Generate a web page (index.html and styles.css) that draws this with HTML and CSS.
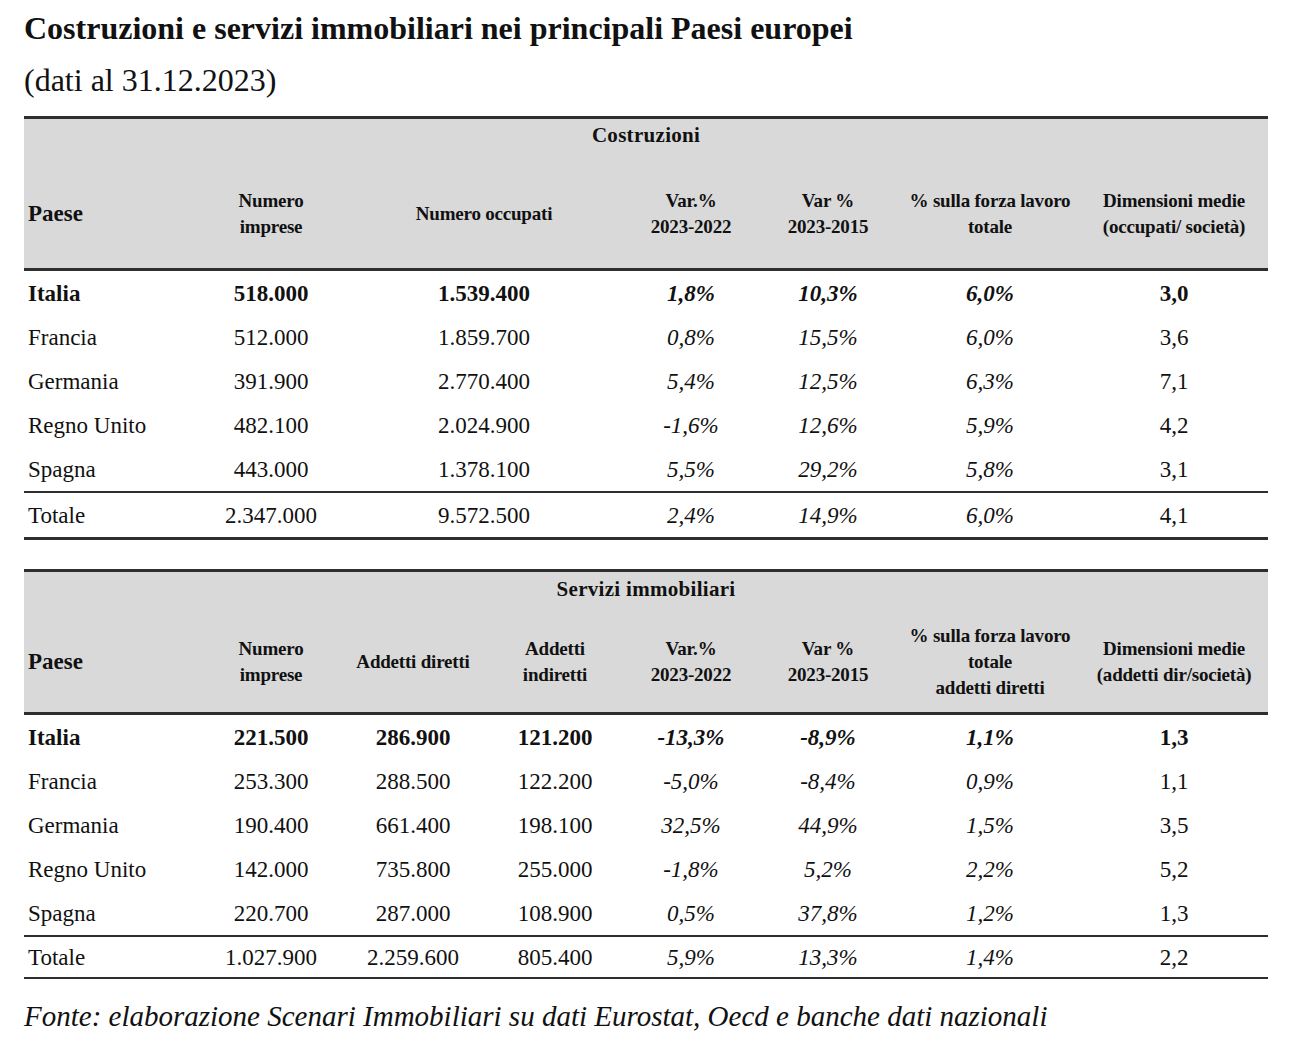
FILE: index.html
```html
<!DOCTYPE html>
<html lang="it">
<head>
<meta charset="utf-8">
<title>Costruzioni e servizi immobiliari</title>
<link rel="stylesheet" href="styles.css">
</head>
<body>
<div class="page">
  <h1 class="title">Costruzioni e servizi immobiliari nei principali Paesi europei</h1>
  <p class="subtitle">(dati al 31.12.2023)</p>

  <table class="data t1">
    <colgroup>
      <col class="c1"><col class="c2"><col class="c3"><col class="c4"><col class="c5"><col class="c6"><col class="c7"><col class="c8">
    </colgroup>
    <thead>
      <tr class="group"><th colspan="8">Costruzioni</th></tr>
      <tr class="heads">
        <th class="paese">Paese</th>
        <th>Numero<br>imprese</th>
        <th colspan="2">Numero occupati</th>
        <th>Var.%<br>2023-2022</th>
        <th>Var %<br>2023-2015</th>
        <th>% sulla forza lavoro<br>totale</th>
        <th>Dimensioni medie<br>(occupati/ società)</th>
      </tr>
    </thead>
    <tbody>
      <tr class="bold"><td class="paese">Italia</td><td>518.000</td><td colspan="2">1.539.400</td><td class="it">1,8%</td><td class="it">10,3%</td><td class="it">6,0%</td><td>3,0</td></tr>
      <tr><td class="paese">Francia</td><td>512.000</td><td colspan="2">1.859.700</td><td class="it">0,8%</td><td class="it">15,5%</td><td class="it">6,0%</td><td>3,6</td></tr>
      <tr><td class="paese">Germania</td><td>391.900</td><td colspan="2">2.770.400</td><td class="it">5,4%</td><td class="it">12,5%</td><td class="it">6,3%</td><td>7,1</td></tr>
      <tr><td class="paese">Regno Unito</td><td>482.100</td><td colspan="2">2.024.900</td><td class="it">-1,6%</td><td class="it">12,6%</td><td class="it">5,9%</td><td>4,2</td></tr>
      <tr><td class="paese">Spagna</td><td>443.000</td><td colspan="2">1.378.100</td><td class="it">5,5%</td><td class="it">29,2%</td><td class="it">5,8%</td><td>3,1</td></tr>
      <tr class="total"><td class="paese">Totale</td><td>2.347.000</td><td colspan="2">9.572.500</td><td class="it">2,4%</td><td class="it">14,9%</td><td class="it">6,0%</td><td>4,1</td></tr>
    </tbody>
  </table>

  <table class="data t2">
    <colgroup>
      <col class="c1"><col class="c2"><col class="c3"><col class="c4"><col class="c5"><col class="c6"><col class="c7"><col class="c8">
    </colgroup>
    <thead>
      <tr class="group"><th colspan="8">Servizi immobiliari</th></tr>
      <tr class="heads">
        <th class="paese">Paese</th>
        <th>Numero<br>imprese</th>
        <th>Addetti diretti</th>
        <th>Addetti<br>indiretti</th>
        <th>Var.%<br>2023-2022</th>
        <th>Var %<br>2023-2015</th>
        <th>% sulla forza lavoro<br>totale<br>addetti diretti</th>
        <th>Dimensioni medie<br>(addetti dir/società)</th>
      </tr>
    </thead>
    <tbody>
      <tr class="bold"><td class="paese">Italia</td><td>221.500</td><td>286.900</td><td>121.200</td><td class="it">-13,3%</td><td class="it">-8,9%</td><td class="it">1,1%</td><td>1,3</td></tr>
      <tr><td class="paese">Francia</td><td>253.300</td><td>288.500</td><td>122.200</td><td class="it">-5,0%</td><td class="it">-8,4%</td><td class="it">0,9%</td><td>1,1</td></tr>
      <tr><td class="paese">Germania</td><td>190.400</td><td>661.400</td><td>198.100</td><td class="it">32,5%</td><td class="it">44,9%</td><td class="it">1,5%</td><td>3,5</td></tr>
      <tr><td class="paese">Regno Unito</td><td>142.000</td><td>735.800</td><td>255.000</td><td class="it">-1,8%</td><td class="it">5,2%</td><td class="it">2,2%</td><td>5,2</td></tr>
      <tr><td class="paese">Spagna</td><td>220.700</td><td>287.000</td><td>108.900</td><td class="it">0,5%</td><td class="it">37,8%</td><td class="it">1,2%</td><td>1,3</td></tr>
      <tr class="total"><td class="paese">Totale</td><td>1.027.900</td><td>2.259.600</td><td>805.400</td><td class="it">5,9%</td><td class="it">13,3%</td><td class="it">1,4%</td><td>2,2</td></tr>
    </tbody>
  </table>

  <p class="source">Fonte: elaborazione Scenari Immobiliari su dati Eurostat, Oecd e banche dati nazionali</p>
</div>
</body>
</html>
```

FILE: styles.css
```css
html, body {
  margin: 0;
  padding: 0;
  background: #ffffff;
}

.page {
  padding: 8px 0 0 24px;
  font-family: "Liberation Serif", "Times New Roman", serif;
  color: #111111;
}

.title {
  margin: 0;
  font-size: 32px;
  font-weight: bold;
  line-height: 40px;
}

.subtitle {
  margin: 12px 0 0 0;
  font-size: 32px;
  line-height: 40px;
}

.data {
  width: 1244px;
  table-layout: fixed;
  border-collapse: collapse;
  font-size: 23px;
}

.t1 { margin-top: 16px; }
.t2 { margin-top: 29px; }

.c1 { width: 176px; }
.c2 { width: 142px; }
.c3 { width: 142px; }
.c4 { width: 142px; }
.c5 { width: 130px; }
.c6 { width: 144px; }
.c7 { width: 180px; }
.c8 { width: 188px; }

.data thead {
  background: #d9d9d9;
}

.data thead tr.group th {
  border-top: 3px solid #2e2e2e;
  font-size: 21px;
  letter-spacing: 0.3px;
  height: 32px;
  padding: 0;
  vertical-align: middle;
}

.t2 thead tr.group th {
  height: 34px;
}

.data thead tr.heads th {
  font-size: 19px;
  line-height: 26px;
  font-weight: bold;
  letter-spacing: -0.2px;
  text-align: center;
  vertical-align: middle;
  padding: 8px 0 0 0;
  height: 109px;
  border-bottom: 3px solid #2e2e2e;
}

.t2 thead tr.heads th {
  padding-top: 6px;
  height: 100px;
}

.data thead tr.heads th.paese {
  font-size: 23px;
  text-align: left;
  padding-left: 4px;
  letter-spacing: 0;
}

.data td {
  height: 44px;
  padding: 0;
  text-align: center;
  vertical-align: middle;
  line-height: 1;
}

.data td.paese {
  text-align: left;
  padding-left: 4px;
}

.data td.it {
  font-style: italic;
}

.data tr.bold td {
  font-weight: bold;
}

.data tr.total td {
  border-top: 2px solid #2e2e2e;
  border-bottom: 3px solid #2e2e2e;
}

.t2 tr.total td {
  height: 40px;
  border-bottom-width: 2px;
}

.source {
  margin: 20px 0 0 0;
  font-size: 29px;
  font-style: italic;
  line-height: 34px;
}
```
